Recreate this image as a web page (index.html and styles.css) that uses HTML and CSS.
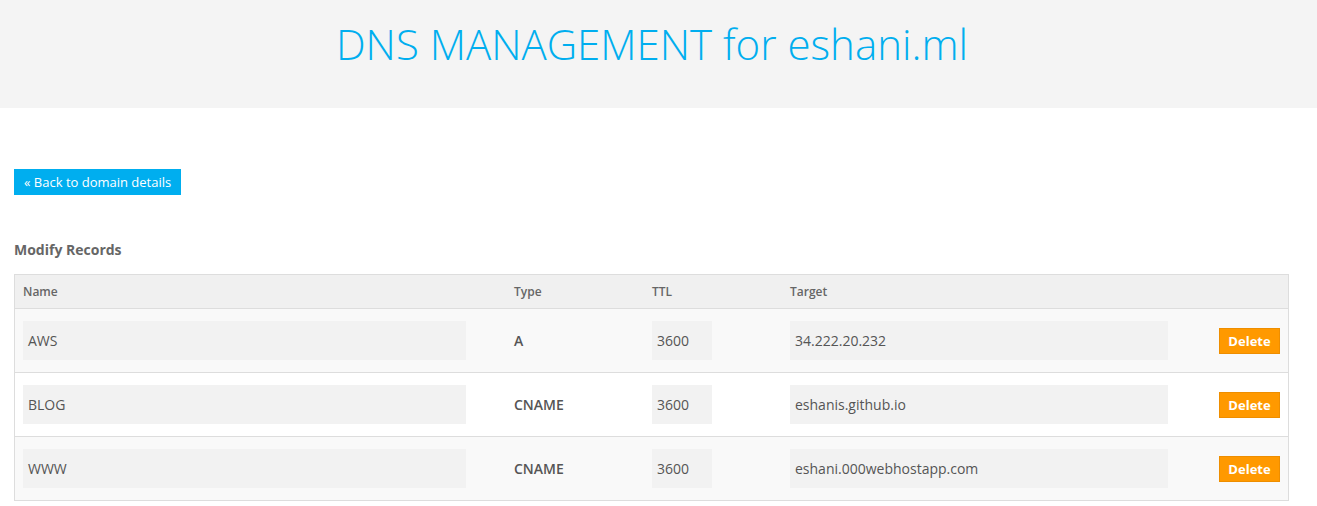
FILE: index.html
```html
<!DOCTYPE html>
<html>
<head>
<meta charset="utf-8">
<title>DNS Management</title>
<link rel="stylesheet" href="styles.css">
</head>
<body>
<header class="banner">
  <h1 class="title">DNS MANAGEMENT for eshani.ml</h1>
</header>
<main class="content">
  <a class="btn-back" href="#">&laquo; Back to domain details</a>
  <h2 class="section-title">Modify Records</h2>
  <table class="records">
    <colgroup>
      <col class="c-name"><col class="c-type"><col class="c-ttl"><col class="c-target"><col class="c-action">
    </colgroup>
    <thead>
      <tr><th>Name</th><th>Type</th><th>TTL</th><th>Target</th><th></th></tr>
    </thead>
    <tbody>
      <tr class="odd">
        <td><div class="field f-name">AWS</div></td>
        <td class="type">A</td>
        <td><div class="field f-ttl">3600</div></td>
        <td><div class="field f-target">34.222.20.232</div></td>
        <td class="action"><button class="btn-delete">Delete</button></td>
      </tr>
      <tr>
        <td><div class="field f-name">BLOG</div></td>
        <td class="type">CNAME</td>
        <td><div class="field f-ttl">3600</div></td>
        <td><div class="field f-target">eshanis.github.io</div></td>
        <td class="action"><button class="btn-delete">Delete</button></td>
      </tr>
      <tr class="odd">
        <td><div class="field f-name">WWW</div></td>
        <td class="type">CNAME</td>
        <td><div class="field f-ttl">3600</div></td>
        <td><div class="field f-target">eshani.000webhostapp.com</div></td>
        <td class="action"><button class="btn-delete">Delete</button></td>
      </tr>
    </tbody>
  </table>
</main>
</body>
</html>
```

FILE: styles.css
```css
* { box-sizing: border-box; }
html, body { margin: 0; padding: 0; background: #fff; }
body {
  font-family: "Open Sans", "Liberation Sans", sans-serif;
  color: #555;
}
.banner {
  height: 108px;
  background: #f4f4f4;
  display: flex;
  justify-content: center;
  align-items: flex-start;
  padding-right: 13px;
}
.title {
  margin: 16px 0 0;
  font-size: 42px;
  font-weight: 300;
  color: #00aeef;
  line-height: 56px;
}
.content {
  padding: 61px 14px 0;
  display: flex;
  flex-direction: column;
  align-items: flex-start;
}
.btn-back {
  display: block;
  background: #00aeef;
  color: #fff;
  text-decoration: none;
  font-size: 13px;
  line-height: 26px;
  height: 26px;
  padding: 0 10px;
}
.section-title {
  margin: 45px 0 0;
  font-size: 14px;
  font-weight: 700;
  color: #666;
  line-height: 20px;
}
.records {
  margin-top: 14px;
  width: 1275px;
  table-layout: fixed;
  border-collapse: separate;
  border-spacing: 0;
  border: 1px solid #ddd;
}
.c-name { width: 491px; }
.c-type { width: 138px; }
.c-ttl { width: 138px; }
.c-target { width: 394px; }
.c-action { width: 112px; }
.records th {
  background: #f0f0f0;
  height: 33px;
  padding: 0 8px;
  text-align: left;
  font-size: 12px;
  font-weight: 600;
  color: #666;
}
.records td {
  border-top: 1px solid #ddd;
  padding: 12px 8px;
  height: 64px;
  vertical-align: middle;
  background: #fff;
}
.records tr.odd td { background: #f9f9f9; }
.field {
  height: 39px;
  line-height: 39px;
  background: #f2f2f2;
  padding-left: 5px;
  font-size: 14px;
  color: #555;
  white-space: nowrap;
  overflow: hidden;
}
.f-name { width: 443px; }
.f-ttl { width: 60px; }
.f-target { width: 378px; }
.type {
  font-size: 14px;
  font-weight: 600;
  color: #555;
}
.action { text-align: right; }
.btn-delete {
  font-family: "Open Sans", "Liberation Sans", sans-serif;
  background: #ff9900;
  border: 1px solid #ee8e00;
  color: #fff;
  font-weight: 700;
  font-size: 13px;
  height: 26px;
  width: 61px;
  padding: 0;
  line-height: 24px;
}
```
